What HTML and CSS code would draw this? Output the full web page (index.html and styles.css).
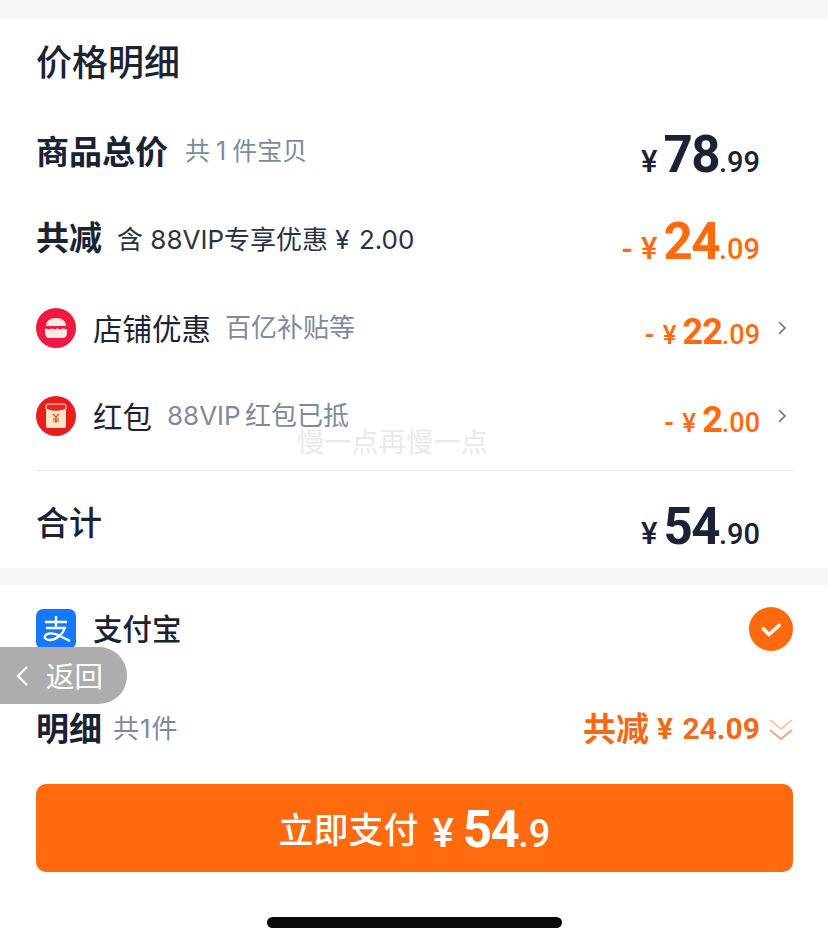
FILE: index.html
```html
<!DOCTYPE html>
<html lang="zh">
<head>
<meta charset="utf-8">
<title>价格明细</title>
<link rel="stylesheet" href="styles.css">
</head>
<body>
<div class="page">
  <div class="band band-top"></div>
  <section class="card detail">
    <h1 class="title">价格明细</h1>
    <div class="row row-total">
      <div class="left"><span class="label-b">商品总价</span><span class="sub sub-total">共 1 件宝贝</span></div>
      <div class="price dark"><span class="yen">¥</span><span class="big">78</span><span class="dec">.99</span></div>
    </div>
    <div class="row row-cut">
      <div class="left"><span class="label-b">共减</span><span class="note">含 88VIP专享优惠 ¥ <span class="note-num">2.00</span></span></div>
      <div class="price orange"><span class="minus">-</span><span class="yen">¥</span><span class="big">24</span><span class="dec">.09</span></div>
    </div>
    <div class="row row-shop">
      <div class="left">
        <svg class="ico" viewBox="0 0 40 40"><circle cx="20" cy="20" r="20" fill="#ef1840"/><path d="M10 18c0-5 4-8 10-8s10 3 10 8z" fill="#fbe9e4"/><path d="M9 21c2-1.500 3.500 1.500 5.500 0s3.500 1.500 5.500 0 3.500 1.500 5.500 0 3.500 1 5.500 0v4c0 3-2 5-4 5H13c-2 0-4-2-4-5z" fill="#fbe9e4"/></svg>
        <span class="label">店铺优惠</span><span class="sub sub-shop">百亿补贴等</span>
      </div>
      <div class="right">
        <div class="price orange small"><span class="minus">-</span><span class="yen">¥</span><span class="big">22</span><span class="dec">.09</span></div>
        <svg class="chev" viewBox="0 0 10 16"><path d="M2 2l6 6-6 6" fill="none" stroke="#6b7280" stroke-width="1.600"/></svg>
      </div>
    </div>
    <div class="row row-red">
      <div class="left">
        <svg class="ico" viewBox="0 0 40 40"><circle cx="20" cy="20" r="20" fill="#ea1c1c"/><rect x="10" y="8" width="20" height="24" rx="2" fill="#fde6c4"/><path d="M10 10a2 2 0 0 1 2-2h16a2 2 0 0 1 2 2v3c-6 3-14 3-20 0z" fill="#e8262a" stroke="#fde6c4" stroke-width="1"/><path d="M17 18l3 3 3-3M20 21v6M17 23h6M17 25h6" fill="none" stroke="#d8452a" stroke-width="1.200"/></svg>
        <span class="label">红包</span><span class="sub sub-red">88VIP 红包已抵</span>
      </div>
      <div class="right">
        <div class="price orange small"><span class="minus">-</span><span class="yen">¥</span><span class="big">2</span><span class="dec">.00</span></div>
        <svg class="chev" viewBox="0 0 10 16"><path d="M2 2l6 6-6 6" fill="none" stroke="#6b7280" stroke-width="1.600"/></svg>
      </div>
    </div>
    <div class="row row-sum">
      <span class="label-m">合计</span>
      <div class="price dark sum"><span class="yen">¥</span><span class="big">54</span><span class="dec">.90</span></div>
    </div>
  </section>
  <div class="band"></div>
  <section class="card pay">
    <div class="row row-pay">
      <div class="left">
        <svg class="ico" viewBox="0 0 40 40"><rect width="40" height="40" rx="7" fill="#1677ff"/><path d="M9 13h22M20 7v12M10 19h19c-2 6-9 12-15 12-4 0-6-2-5-4 2-4 10-3 15 0l10 5" fill="none" stroke="#fff" stroke-width="2.300"/></svg>
        <span class="label label-pay">支付宝</span>
      </div>
      <svg class="check" viewBox="0 0 44 44"><circle cx="22" cy="22" r="22" fill="#ff6a0e"/><path d="M14.500 22l5.500 5.500 10-9" fill="none" stroke="#fff" stroke-width="3.600" stroke-linecap="round" stroke-linejoin="round"/></svg>
    </div>
    <div class="row row-more">
      <div class="left"><span class="label-b">明细</span><span class="sub sub-more">共1件</span></div>
      <div class="right right-more">
        <span class="cut-text">共减</span>
        <span class="cut-num">¥ 24.09</span>
        <svg class="dbl" viewBox="0 0 24 24"><path d="M1 3l11 9 11-9" fill="none" stroke="#f9c9ad" stroke-width="2"/><path d="M1 13l11 9 11-9" fill="none" stroke="#f3a67c" stroke-width="2"/></svg>
      </div>
    </div>
    <button class="paybtn"><span class="pay-text">立即支付</span><span class="pay-num"><span class="yen">¥</span><span class="big">54</span><span class="dec">.9</span></span></button>
    <div class="home"></div>
  </section>
  <div class="back">
    <svg class="back-ico" viewBox="0 0 14 22"><path d="M12 2L3 11l9 9" fill="none" stroke="#fff" stroke-width="2.400"/></svg>
    <span class="back-text">返回</span>
  </div>
  <div class="mark">慢一点再慢一点</div>
</div>
</body>
</html>
```

FILE: styles.css
```css
* { box-sizing: border-box; }
html, body { margin: 0; padding: 0; background: #fff; }
.page {
  position: relative;
  width: 828px;
  height: 944px;
  overflow: hidden;
  font-family: "Noto Sans CJK SC", "Noto Sans", sans-serif;
  color: #1a2233;
}
.band { height: 17px; background: #f5f5f5; }
.band-top { height: 18px; }
.card { padding: 0 35px 0 36px; background: #fff; }
.detail { height: 550px; }
.pay { height: 359px; position: relative; }
.title { margin: 0; padding-top: 18px; height: 88px; font-size: 36px; line-height: 48px; font-weight: 500; }
.row { display: flex; align-items: center; justify-content: space-between; }
.left { display: flex; align-items: center; }
.right { display: flex; align-items: center; }
.row-total { height: 92px; }
.row-cut { height: 80px; }
.row-shop { height: 100px; }
.row-red { height: 93px; padding-bottom: 16px; border-bottom: 1px solid #e6e6e6; }
.row-sum { height: 97px; padding-top: 10px; }
.label-b { font-size: 33px; font-weight: 700; line-height: 44px; padding-bottom: 4px; height: 48px; }
.label-m { font-size: 33px; font-weight: 500; line-height: 44px; padding-bottom: 8px; height: 52px; }
.label { font-size: 29.500px; font-weight: 400; line-height: 40px; margin-left: 17px; padding-bottom: 2px; height: 42px; }
.label-pay { font-weight: 500; padding-bottom: 4px; height: 44px; }
.sub {
  font-family: "Inter", "Noto Sans CJK SC", sans-serif;
  font-size: 26px;
  color: #7e8a9c;
  margin-left: 16px;
  line-height: 40px;
}
.sub-shop { margin-left: 14px; }
.sub-total { font-size: 25px; margin-left: 17px; word-spacing: -1px; padding-bottom: 2px; height: 42px; }
.sub-red { word-spacing: -3px; margin-left: 15px; }
.sub-more { margin-left: 11px; letter-spacing: 1px; }
.note {
  font-family: "Inter", "Noto Sans CJK SC", sans-serif;
  font-size: 26px;
  margin-left: 15px;
  color: #2a3242;
  line-height: 40px;
  padding-top: 4px;
  height: 44px;
}
.note-num { margin-left: 2px; }
.ico { width: 40px; height: 40px; display: block; }
.price { display: flex; align-items: baseline; font-family: "Roboto", sans-serif; font-weight: 700; padding-top: 4px; margin-right: 33px; }
.right .price { margin-right: 0; padding-top: 8px; }
.row-cut .price { padding-top: 6px; }
.sum { padding-top: 4px; }
.dark { color: #1a2233; }
.orange { color: #ff6a0e; }
.yen { font-size: 31px; margin-right: 6px; font-weight: 500; }
.big { font-size: 51px; letter-spacing: -1.500px; }
.dec { font-size: 29px; font-weight: 500; }
.minus { font-size: 30px; margin-right: 8px; }
.small .big { font-size: 36px; letter-spacing: -1px; }
.small .dec { font-size: 27px; }
.small .yen { font-size: 26px; }
.small .minus { font-size: 26px; }
.chev { width: 10px; height: 16px; margin-left: 17px; margin-right: 6px; }
.row-pay { height: 88px; }
.check { width: 44px; height: 44px; }
.row-more { height: 111px; }
.right-more { gap: 8px; }
.cut-text { font-size: 33px; font-weight: 700; line-height: 44px; padding-bottom: 4px; height: 48px; color: #f06a1a; }
.cut-num { font-family: "Roboto", sans-serif; font-size: 30px; font-weight: 700; color: #f06a1a; word-spacing: 2px; }
.dbl { width: 24px; height: 24px; margin-left: 1px; }
.paybtn {
  display: flex;
  align-items: center;
  justify-content: center;
  width: 757px;
  height: 88px;
  padding: 0;
  border: 0;
  border-radius: 10px;
  background: #ff6a0e;
  color: #fff;
  font-family: "Roboto", "Noto Sans CJK SC", sans-serif;
  font-weight: 700;
}
.pay-text { font-family: "Noto Sans CJK SC", sans-serif; font-size: 35px; font-weight: 500; margin-right: 14px; line-height: 48px; }
.pay-num { display: flex; align-items: baseline; padding-top: 2px; }
.paybtn .yen { font-size: 40px; margin-right: 9px; }
.paybtn .big { font-size: 51px; }
.paybtn .dec { font-size: 38px; }
.home {
  position: absolute;
  left: 267px;
  top: 332px;
  width: 295px;
  height: 11px;
  border-radius: 6px;
  background: #0a0a0a;
}
.back {
  position: absolute;
  left: 0;
  top: 647px;
  width: 127px;
  height: 57px;
  display: flex;
  align-items: center;
  padding-left: 15px;
  gap: 17px;
  background: #adadad;
  border-radius: 0 28px 28px 0;
}
.back-ico { width: 14px; height: 22px; }
.back-text { color: #fff; font-size: 28.500px; line-height: 40px; padding-bottom: 2px; height: 42px; }
.mark {
  position: absolute;
  left: 297px;
  top: 424px;
  color: #e9e9e9;
  font-size: 27px;
  line-height: 34px;
  letter-spacing: 0.300px;
}
```
